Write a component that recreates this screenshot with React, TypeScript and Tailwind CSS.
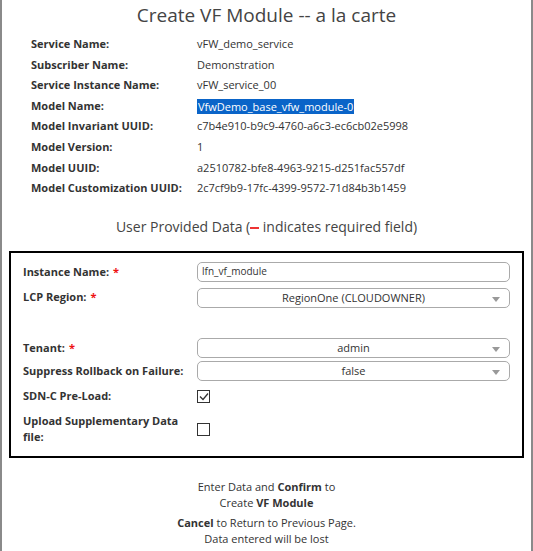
const info: [string, string, boolean?][] = [
  ["Service Name:", "vFW_demo_service"],
  ["Subscriber Name:", "Demonstration"],
  ["Service Instance Name:", "vFW_service_00"],
  ["Model Name:", "VfwDemo_base_vfw_module-0", true],
  ["Model Invariant UUID:", "c7b4e910-b9c9-4760-a6c3-ec6cb02e5998"],
  ["Model Version:", "1"],
  ["Model UUID:", "a2510782-bfe8-4963-9215-d251fac557df"],
  ["Model Customization UUID:", "2c7cf9b9-17fc-4399-9572-71d84b3b1459"],
];

function Select({ value }: { value: string }) {
  return (
    <div className="relative flex h-[20px] w-[313px] items-center justify-center rounded-[5px] border border-[#aaa] text-[11px] text-[#333]">
      {value}
      <span className="absolute right-[9px] top-[8px] h-0 w-0 border-x-[4px] border-t-[5px] border-x-transparent border-t-[#999]" />
    </div>
  );
}

function Req() {
  return <span className="ml-1 text-[#e11]">*</span>;
}

export default function App() {
  return (
    <div
      className="mx-auto h-[551px] w-[533px] border-x-2 border-[#8a8a8a] bg-white text-[#333]"
      style={{ fontFamily: '"Open Sans", "DejaVu Sans", sans-serif' }}
    >
      <h1 className="pt-[2px] text-center text-[19px] leading-[26px] text-[#444]">
        Create VF Module -- a la carte
      </h1>
      <div className="mt-[6px] flex flex-col pl-[29px]">
        {info.map(([label, value, sel]) => (
          <div key={label} className="flex h-[20.6px] items-center text-[11px]">
            <span className="w-[166px] font-bold text-[#333]">{label}</span>
            <span className={sel ? "bg-[#0a64c8] px-px leading-[15px] text-white" : "text-[#333]"}>{value}</span>
          </div>
        ))}
      </div>
      <p className="mt-[17px] text-center text-[14px] text-[#444]">
        User Provided Data (
        <span className="inline-block h-[2px] w-[9px] -translate-y-[3px] bg-[#e33]" /> indicates required field)
      </p>
      <div className="mx-[7px] mt-[14px] border-2 border-black px-[12px] pb-[11px] pt-[9px] text-[11px]">
        <div className="flex items-center">
          <span className="w-[174px] font-bold">
            Instance Name:
            <Req />
          </span>
          <div className="flex h-[20px] w-[313px] items-center rounded-[5px] border border-[#aaa] px-[4px] text-[10px]">
            lfn_vf_module
          </div>
        </div>
        <div className="mt-[6px] flex items-start">
          <span className="w-[174px] pt-[1px] font-bold">
            LCP Region:
            <Req />
          </span>
          <Select value="RegionOne (CLOUDOWNER)" />
        </div>
        <div className="mt-[30px] flex items-center">
          <span className="w-[174px] font-bold">
            Tenant:
            <Req />
          </span>
          <Select value="admin" />
        </div>
        <div className="mt-[3px] flex items-center">
          <span className="w-[174px] font-bold">Suppress Rollback on Failure:</span>
          <Select value="false" />
        </div>
        <div className="mt-[7px] flex items-center">
          <span className="w-[174px] font-bold">SDN-C Pre-Load:</span>
          <span className="flex h-[13px] w-[13px] items-center justify-center border border-[#333]">
            <svg width="10" height="9" viewBox="0 0 10 9">
              <path d="M1 4.5 L4 7.5 L9 1.5" fill="none" stroke="#333" strokeWidth="1.3" />
            </svg>
          </span>
        </div>
        <div className="mt-[9px] flex items-center">
          <span className="w-[174px] font-bold leading-[16px]">Upload Supplementary Data file:</span>
          <span className="h-[13px] w-[13px] border border-[#333]" />
        </div>
      </div>
      <div className="mt-[21px] text-center text-[11px] leading-[16px] text-[#333]">
        <p>
          Enter Data and <b>Confirm</b> to
        </p>
        <p>
          Create <b>VF Module</b>
        </p>
        <p className="mt-[4px]">
          <b>Cancel</b> to Return to Previous Page.
        </p>
        <p>Data entered will be lost</p>
      </div>
    </div>
  );
}
